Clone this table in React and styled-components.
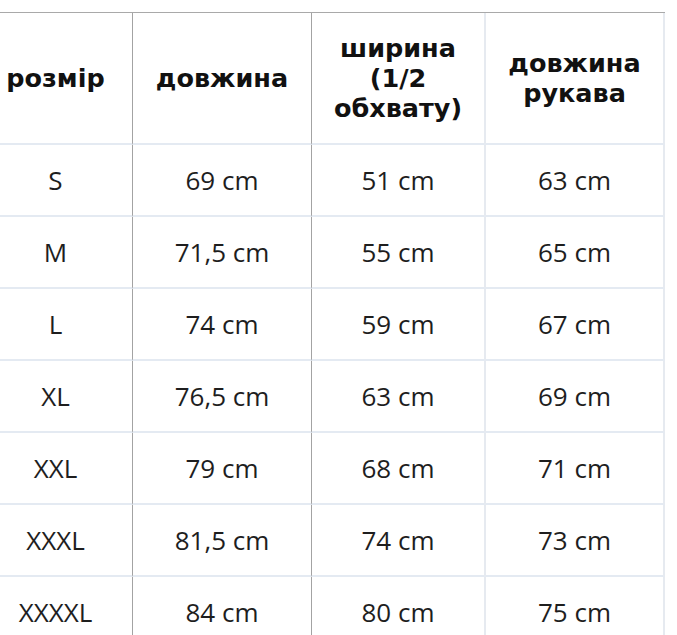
import React from 'react'
import styled, {createGlobalStyle} from 'styled-components'

const GlobalStyle = createGlobalStyle`
  html, body {
    margin: 0;
    padding: 0;
    background: #ffffff;
  }
  body {
    overflow: hidden;
  }
`

const Page = styled.div`
  width: 677px;
  height: 635px;
  overflow: hidden;
  padding-top: 12px;
  box-sizing: border-box;
`

const Grid = styled.div`
  display: grid;
  grid-template-columns: 154px 179px 174px 179px;
  grid-template-rows: 132px;
  grid-auto-rows: 72px;
  margin-left: -21px;
  width: 686px;
  border-top: 1px solid #a9a9a9;
`

const Cell = styled.div`
  display: flex;
  align-items: center;
  justify-content: center;
  text-align: center;
  box-sizing: border-box;
  padding: 0 8px;
  border-bottom: 2px solid #e4eaf2;
  border-right: ${p => (p.$light ? '2px solid #e6eaf0' : '1px solid #a3a3a3')};
  font-family: "Open Sans", "DejaVu Sans", sans-serif;
  font-size: 26px;
  color: #1e1e1e;
`

const HeadCell = styled(Cell)`
  font-family: "DejaVu Sans", "Open Sans", sans-serif;
  font-weight: bold;
  font-size: 25.5px;
  line-height: 30px;
  color: #111111;
`

const header = ['розмір', 'довжина', 'ширина (1/2 обхвату)', 'довжина рукава']

const rows = [
  ['S', '69 cm', '51 cm', '63 cm'],
  ['M', '71,5 cm', '55 cm', '65 cm'],
  ['L', '74 cm', '59 cm', '67 cm'],
  ['XL', '76,5 cm', '63 cm', '69 cm'],
  ['XXL', '79 cm', '68 cm', '71 cm'],
  ['XXXL', '81,5 cm', '74 cm', '73 cm'],
  ['XXXXL', '84 cm', '80 cm', '75 cm'],
]

export default function App() {
  return (
    <Page>
      <GlobalStyle />
      <Grid>
        {header.map((h, i) => (
          <HeadCell key={h} $light={i > 1}>{h}</HeadCell>
        ))}
        {rows.map(row =>
          row.map((v, i) => (
            <Cell key={row[0] + i} $light={i > 1}>{v}</Cell>
          ))
        )}
      </Grid>
    </Page>
  )
}
